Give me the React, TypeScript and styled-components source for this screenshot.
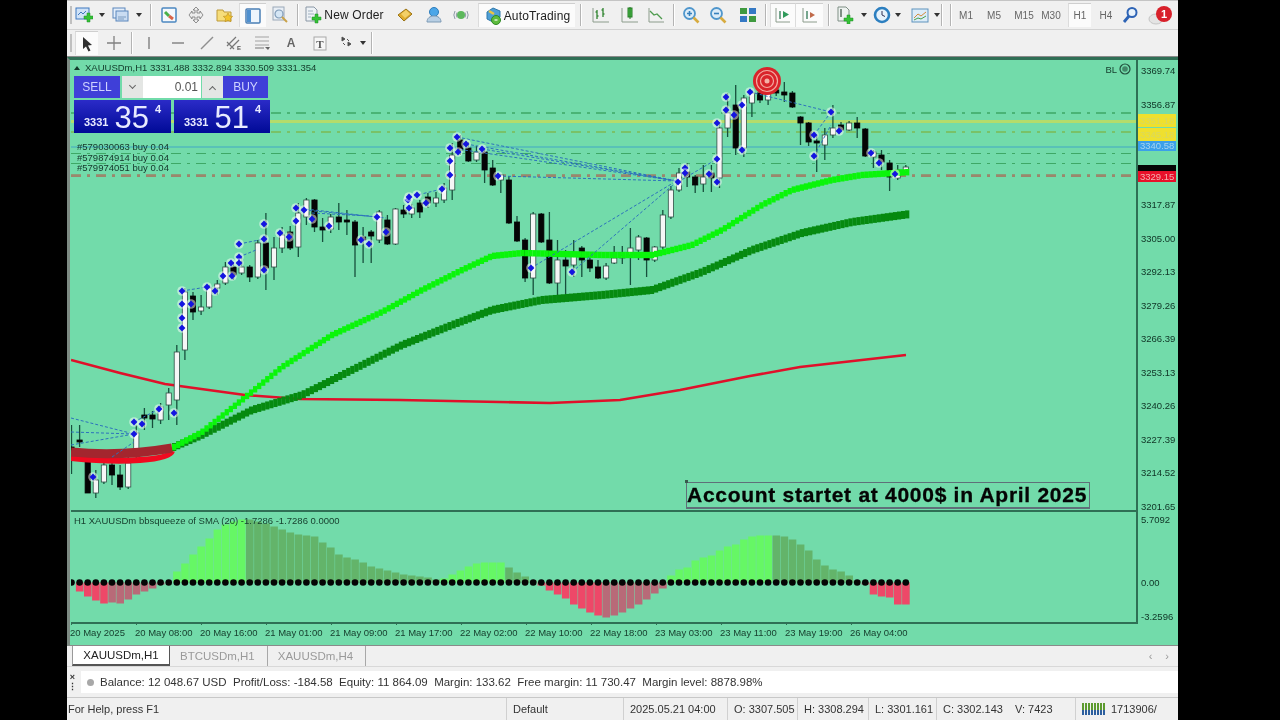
import React from "react";
import styled, { createGlobalStyle } from "styled-components";

const chartGreen = "#72dbaa";
const frameGreen = "#2f6f55";
const uiFont = `"Liberation Sans", Arial, sans-serif`;

const GlobalStyle = createGlobalStyle`
  html, body {
    margin: 0;
    padding: 0;
    width: 1280px;
    height: 720px;
    overflow: hidden;
    background: #000;
    font-family: ${uiFont};
  }
`;

const Screen = styled.div`
  width: 1111px;
  height: 720px;
  margin-left: 67px;
  display: flex;
  flex-direction: column;
  background: #f0f0f0;
  color: #222;
  overflow: hidden;
  filter: blur(0.6px);
`;

/* ---------- toolbars ---------- */

const TopBar = styled.div`
  height: 28px;
  display: flex;
  align-items: center;
  border-top: 1px solid #c4c4c4;
  border-bottom: 1px solid #d2d2d2;
`;

const DrawBar = styled.div`
  height: 27px;
  display: flex;
  align-items: center;
  border-bottom: 1px solid #8a8a8a;
  box-sizing: border-box;
`;

const Grip = styled.span<{ $w: number }>`
  width: 2px;
  height: 18px;
  margin-left: 3px;
  margin-right: ${p => p.$w - 5}px;
  background: #c0c0c0;
  flex: none;
`;

const Sep = styled.span<{ $w: number }>`
  flex: none;
  width: ${p => p.$w}px;
  height: 22px;
  display: flex;
  justify-content: center;
  &::before {
    content: "";
    width: 1px;
    background: #b4b4b4;
    border-right: 1px solid #fff;
  }
`;

const Tool = styled.span<{ $w: number; $active?: boolean }>`
  flex: none;
  width: ${p => p.$w}px;
  height: 24px;
  box-sizing: border-box;
  display: flex;
  align-items: center;
  justify-content: center;
  gap: 2px;
  font-size: 12px;
  background: ${p => (p.$active ? "#fbfbfb" : "transparent")};
  border-top: ${p => (p.$active ? "1px solid #cfcfcf" : "none")};
  border-left: ${p => (p.$active ? "1px solid #dcdcdc" : "none")};
`;

const Caret = styled.span<{ $w?: number }>`
  flex: none;
  width: ${p => p.$w ?? 16}px;
  display: flex;
  justify-content: center;
  &::before {
    content: "";
    flex: none;
    border-left: 3px solid transparent;
    border-right: 3px solid transparent;
    border-top: 4px solid #333;
  }
`;

const Period = styled.span<{ $w: number; $ml?: number; $active?: boolean }>`
  flex: none;
  width: ${p => p.$w}px;
  margin-left: ${p => p.$ml ?? 0}px;
  height: 24px;
  box-sizing: border-box;
  display: flex;
  align-items: center;
  justify-content: center;
  font-size: 10px;
  color: #666;
  background: ${p => (p.$active ? "#fbfbfb" : "transparent")};
  border-top: ${p => (p.$active ? "1px solid #cfcfcf" : "none")};
  border-left: ${p => (p.$active ? "1px solid #dcdcdc" : "none")};
`;

const Icon = ({ children, size = 18 }: { children: React.ReactNode; size?: number }) => (
  <svg width={size} height={size} viewBox="0 0 18 18">
    {children}
  </svg>
);

const Plus = ({ x = 0, y = 0 }: { x?: number; y?: number }) => (
  <path
    transform={`translate(${x} ${y})`}
    d="M9 8h3V5h3v3h3v3h-3v3h-3v-3H9z"
    fill="#35c235"
    stroke="#1f8f2a"
    strokeWidth="0.5"
  />
);

const NewChartIcon = () => (
  <Icon>
    <rect x="1" y="2" width="13" height="11" fill="#cfe2f7" stroke="#3f78c0" />
    <path d="M3 9l3-3 2 2 3-3" stroke="#3f78c0" fill="none" />
    <Plus x={0} y={2} />
  </Icon>
);
const ProfilesIcon = () => (
  <Icon>
    <rect x="1" y="2" width="12" height="10" fill="#e4eefa" stroke="#5a86bb" />
    <rect x="4" y="5" width="12" height="10" fill="#c9dcf2" stroke="#5a86bb" />
    <path d="M6 11h8M6 13h6" stroke="#7d9cc0" />
  </Icon>
);
const MarketIcon = () => (
  <Icon>
    <rect x="2" y="2" width="14" height="14" rx="1" fill="#f4f8fc" stroke="#4b87c0" strokeWidth="1.5" />
    <path d="M5 6l4 4" stroke="#49b049" strokeWidth="3" />
    <path d="M9 10l4 3" stroke="#d9654a" strokeWidth="3" />
  </Icon>
);
const NavigatorIcon = () => (
  <Icon>
    <path d="M9 1l3 3h-2v3h3V5l3 4-3 4v-2h-3v3h2l-3 3-3-3h2v-3H5v2L2 9l3-4v2h3V4H6z" fill="#ececec" stroke="#777" strokeWidth="0.8" />
  </Icon>
);
const FolderStarIcon = () => (
  <Icon>
    <path d="M1 4h6l1 2h7v9H1z" fill="#f6dd7a" stroke="#bd9a3a" />
    <path d="M12 7l1.5 3 3.2.4-2.3 2.2.6 3.2-3-1.6-3 1.6.6-3.2-2.3-2.2 3.2-.4z" fill="#f2c42c" stroke="#b88d20" strokeWidth="0.6" />
  </Icon>
);
const TerminalIcon = () => (
  <Icon>
    <rect x="2" y="2" width="14" height="14" rx="1" fill="#eef5fc" stroke="#4a7fb5" strokeWidth="1.5" />
    <rect x="3" y="3" width="4" height="12" fill="#4f90cf" />
  </Icon>
);
const TesterIcon = () => (
  <Icon>
    <rect x="2" y="1" width="11" height="13" fill="#e8eef5" stroke="#9aa8b8" />
    <circle cx="8" cy="8" r="4" fill="#d5e6f5" stroke="#7f9bb8" strokeWidth="1.2" />
    <path d="M11 11l5 5" stroke="#c9a24a" strokeWidth="2" />
  </Icon>
);
const OrderIcon = () => (
  <Icon>
    <path d="M2 1h8l3 3v11H2z" fill="#eef2f6" stroke="#8a97a5" />
    <path d="M4 5h5M4 8h6M4 11h3" stroke="#9fb0c0" />
    <Plus x={-1} y={3} />
  </Icon>
);
const GoldIcon = () => (
  <Icon>
    <path d="M2 9l8-6 6 5-8 7z" fill="#e0ad2f" stroke="#9b7415" />
    <path d="M5 8l5-4 4 4-5 4z" fill="#f3d067" />
  </Icon>
);
const PersonIcon = () => (
  <Icon>
    <circle cx="9" cy="6" r="4.5" fill="#4ba6e8" stroke="#2c7dbd" />
    <path d="M2 16c0-4 3-6 7-6s7 2 7 6z" fill="#b8cfe4" stroke="#7d9ab5" />
  </Icon>
);
const SignalIcon = () => (
  <Icon>
    <circle cx="9" cy="9" r="4" fill="#5cb85c" />
    <path d="M3 5a8 8 0 000 8M15 5a8 8 0 010 8M5 6.5a5 5 0 000 5M13 6.5a5 5 0 010 5" stroke="#8d9ba8" fill="none" />
  </Icon>
);
const AutoTradingIcon = () => (
  <Icon>
    <path d="M3 5l6-4 7 3v6l-7 5-6-3z" fill="#4f9fd6" stroke="#2f78ab" />
    <path d="M5 4l5 3" stroke="#e9c542" strokeWidth="2.5" />
    <circle cx="12" cy="13" r="4.5" fill="#5dbb3d" stroke="#2f8a25" />
    <path d="M10.5 13h3" stroke="#fff" strokeWidth="1.2" />
  </Icon>
);
const BarsIcon = () => (
  <Icon>
    <path d="M1 2v14h16" stroke="#8c9c8c" fill="none" />
    <path d="M5 4v9M3.5 6H5M5 10h1.5M11 2v9M9.5 4H11M11 8h1.5" stroke="#3b8b3b" strokeWidth="1.4" fill="none" />
  </Icon>
);
const CandlesIcon = () => (
  <Icon>
    <path d="M1 2v14h16" stroke="#8c9c8c" fill="none" />
    <rect x="7" y="2" width="4" height="9" fill="#4cc14c" stroke="#257a25" />
    <path d="M9 1v12" stroke="#257a25" />
  </Icon>
);
const LineIcon = () => (
  <Icon>
    <path d="M2 2v14h15" stroke="#8c9c8c" fill="none" />
    <path d="M3 5l4 4 3-1 5 5" stroke="#4d9a4d" strokeWidth="1.3" fill="none" />
  </Icon>
);
const ZoomIcon = ({ out }: { out?: boolean }) => (
  <Icon>
    <circle cx="7.5" cy="7.5" r="5.5" fill="#dcecf8" stroke="#4f96cc" strokeWidth="1.8" />
    <path d="M11.5 11.5l5 5" stroke="#d7ab3f" strokeWidth="2.6" />
    <path d={out ? "M5 7.5h5" : "M5 7.5h5M7.5 5v5"} stroke="#3781bd" strokeWidth="1.6" />
  </Icon>
);
const TileIcon = () => (
  <Icon>
    <rect x="1" y="2" width="7" height="6" fill="#3f9a3f" />
    <rect x="10" y="2" width="7" height="6" fill="#3579c4" />
    <rect x="1" y="10" width="7" height="6" fill="#3579c4" />
    <rect x="10" y="10" width="7" height="6" fill="#3f9a3f" />
  </Icon>
);
const ScrollIcon = ({ shift }: { shift?: boolean }) => (
  <Icon>
    <path d="M2 1v14h14" stroke="#8c9c8c" fill="none" />
    <path d="M6 4v8" stroke="#4a8a6a" strokeWidth="1.5" />
    {shift ? (
      <path d="M9 5v6l5-3z" fill="#c06a4a" />
    ) : (
      <path d="M9 4v7l6-3.5z" fill="#2f9a5a" />
    )}
  </Icon>
);
const IndicatorIcon = () => (
  <Icon>
    <path d="M2 1h8l3 3v11H2z" fill="#eef2f0" stroke="#7f8f85" />
    <path d="M5 3v8" stroke="#7f8f85" strokeWidth="2" />
    <Plus x={-1} y={4} />
  </Icon>
);
const ClockIcon = () => (
  <Icon>
    <circle cx="9" cy="9" r="7" fill="#e6f2fb" stroke="#2c7fc0" strokeWidth="2.6" />
    <path d="M9 5v4l3 1.5" stroke="#335" fill="none" />
  </Icon>
);
const TemplateIcon = () => (
  <Icon>
    <rect x="1" y="3" width="16" height="13" fill="#dcecf8" stroke="#5f93bd" />
    <path d="M3 12l4-4 3 2 5-4" stroke="#d38a3a" fill="none" />
    <path d="M3 14l4-2 3 1 5-3" stroke="#4aa04a" fill="none" />
  </Icon>
);
const SearchIcon = () => (
  <Icon>
    <circle cx="11" cy="6.5" r="4.5" fill="#e8f2fb" stroke="#2d63b5" strokeWidth="2" />
    <path d="M8 10l-5 6" stroke="#2d63b5" strokeWidth="2.8" />
  </Icon>
);
const BellIcon = () => (
  <svg width="28" height="22" viewBox="0 0 28 22">
    <ellipse cx="11" cy="15" rx="7" ry="5" fill="#e4e4e4" stroke="#c4c4c4" />
    <circle cx="19" cy="10" r="8" fill="#d8202a" />
    <text x="19" y="14" fontSize="11" fontWeight="bold" fontFamily="Liberation Sans" fill="#fff" textAnchor="middle">
      1
    </text>
  </svg>
);

const CursorIcon = () => (
  <Icon>
    <path d="M5 2l9 8-4 .5 2.5 5-2 1-2.5-5L5 14z" fill="#2f2f2f" />
  </Icon>
);
const CrossIcon = () => (
  <Icon>
    <path d="M9 2v14M2 9h14" stroke="#808080" strokeWidth="1.3" />
  </Icon>
);
const VLineIcon = () => (
  <Icon>
    <path d="M9 3v12" stroke="#7f7f7f" strokeWidth="1.4" />
  </Icon>
);
const HLineIcon = () => (
  <Icon>
    <path d="M3 9h12" stroke="#7f7f7f" strokeWidth="1.4" />
  </Icon>
);
const TrendIcon = () => (
  <Icon>
    <path d="M3 15L15 3" stroke="#8f8f8f" strokeWidth="1.4" />
  </Icon>
);
const ChannelIcon = () => (
  <Icon>
    <path d="M2 12l9-9M5 15l9-9M2 8l7 7" stroke="#777" strokeWidth="1.2" />
    <text x="12" y="16" fontSize="6" fontFamily="Liberation Sans" fontWeight="bold" fill="#555">E</text>
  </Icon>
);
const FiboIcon = () => (
  <Icon>
    <path d="M2 3h14M2 7h14M2 11h14" stroke="#a2a2a2" />
    <path d="M2 14h9" stroke="#777" />
    <path d="M12 13l3 3 2-3z" fill="#666" />
  </Icon>
);
const TextToolIcon = () => (
  <Icon>
    <rect x="3" y="3" width="12" height="13" fill="#f6f6f6" stroke="#a8a8a8" />
    <text x="9" y="14" fontSize="11" fontFamily="Liberation Serif" fontWeight="bold" fill="#555" textAnchor="middle">T</text>
  </Icon>
);
const ShapesIcon = () => (
  <Icon>
    <path d="M3 3l3 2-3 2zM9 8l3 2-3 2zM4 9l2 2M8 5l2 2" fill="#444" stroke="#555" />
  </Icon>
);

const ToolLabel = styled.span`
  white-space: nowrap;
  letter-spacing: 0.15px;
`;

const TextA = styled.span`
  font-size: 12px;
  font-weight: bold;
  color: #666;
`;

/* ---------- chart ---------- */

const ChartFrame = styled.div`
  height: 589px;
  flex: none;
  box-sizing: border-box;
  background: ${chartGreen};
  border-top: 3px solid ${frameGreen};
  border-left: 3px solid #7d8a83;
  border-bottom: 1px solid #8a8a8a;
  padding-left: 1px;
  display: flex;
  flex-direction: column;
`;

const PaneRow = styled.div`
  display: flex;
  flex: none;
`;

const Plot = styled.div<{ $h: number; $line: number }>`
  position: relative;
  width: 1065px;
  height: ${p => p.$h}px;
  flex: none;
  border-right: 2px solid ${frameGreen};
  border-bottom: ${p => p.$line}px solid ${frameGreen};
  svg {
    display: block;
  }
`;

const PriceAxis = styled.div`
  position: relative;
  flex: 1;
  height: 452px;
  box-sizing: border-box;
  padding: 6px 0 0 3px;
  display: flex;
  flex-direction: column;
  justify-content: space-between;
`;

const AxisLabel = styled.span<{ $mt?: number }>`
  display: block;
  min-height: 10px;
  font-size: 9.5px;
  line-height: 10px;
  color: #0f3325;
  margin-top: ${p => p.$mt ?? 0}px;
  white-space: nowrap;
`;

const IndicatorAxis = styled.div`
  flex: 1;
  padding-left: 3px;
`;

const PriceTag = styled.span<{ $top: number; $h: number; $bg: string; $fg: string }>`
  position: absolute;
  top: ${p => p.$top}px;
  left: 0;
  width: 38px;
  height: ${p => p.$h}px;
  background: ${p => p.$bg};
  color: ${p => p.$fg};
  font-size: 9.5px;
  line-height: ${p => p.$h}px;
  padding-left: 2px;
  box-sizing: border-box;
  overflow: hidden;
`;

const Title = styled.div`
  position: absolute;
  top: 2px;
  left: 3px;
  font-size: 9.5px;
  line-height: 11px;
  color: #123a2a;
  white-space: nowrap;
  &::before {
    content: "";
    display: inline-block;
    margin: 0 5px 1px 0;
    border-left: 3px solid transparent;
    border-right: 3px solid transparent;
    border-bottom: 4px solid #123a2a;
  }
`;

const OrderLabels = styled.div`
  position: absolute;
  top: 82px;
  left: 6px;
  font-size: 9.5px;
  line-height: 10.5px;
  color: #14352a;
`;

const Smiley = styled.div`
  position: absolute;
  top: 3px;
  right: 5px;
  display: flex;
  align-items: center;
  gap: 2px;
  font-size: 9.5px;
  color: #17402f;
`;

const IndicatorTitle = styled.div`
  position: absolute;
  top: 3px;
  left: 3px;
  font-size: 9.5px;
  line-height: 11px;
  color: #17402f;
  white-space: nowrap;
`;

const Annotation = styled.div`
  position: absolute;
  left: 615px;
  top: 422px;
  width: 404px;
  height: 27px;
  box-sizing: border-box;
  border: 1.5px solid #5f7079;
  border-bottom-width: 2px;
  font-size: 21px;
  font-weight: bold;
  line-height: 23px;
  letter-spacing: 0.72px;
  -webkit-text-stroke: 0.3px #050505;
  color: #050505;
  white-space: nowrap;
  &::before {
    content: "";
    position: absolute;
    top: -3px;
    left: -2px;
    width: 3px;
    height: 3px;
    background: #375a4c;
  }
`;

/* trade panel */
const TradePanel = styled.div`
  position: absolute;
  top: 16px;
  left: 3px;
  width: 196px;
  display: flex;
  flex-direction: column;
  gap: 2px;
`;

const TradeTop = styled.div`
  height: 22px;
  display: flex;
`;

const TradeButton = styled.div<{ $w: number }>`
  width: ${p => p.$w}px;
  display: flex;
  align-items: center;
  justify-content: center;
  background: #3f3fd8;
  color: #cfd2ff;
  font-size: 12px;
`;

const Spin = styled.div<{ $ml: number; $up?: boolean }>`
  width: 21px;
  margin-left: ${p => p.$ml}px;
  background: #e4e6e4;
  display: flex;
  align-items: center;
  justify-content: center;
  &::before {
    content: "";
    width: 4px;
    height: 4px;
    border-left: 1.5px solid #666;
    border-top: 1.5px solid #666;
    transform: ${p => (p.$up ? "translateY(2px) rotate(45deg)" : "translateY(-2px) rotate(225deg)")};
  }
`;

const LotInput = styled.div`
  width: 58px;
  background: #fff;
  color: #555;
  font-size: 12px;
  line-height: 22px;
  text-align: right;
  padding-right: 3px;
  box-sizing: border-box;
`;

const QuoteRow = styled.div`
  display: flex;
  gap: 3px;
`;

const Quote = styled.div<{ $w: number }>`
  position: relative;
  width: ${p => p.$w}px;
  height: 33px;
  display: flex;
  align-items: flex-end;
  justify-content: flex-start;
  padding-left: 10px;
  box-sizing: border-box;
  background: linear-gradient(#2b2bc8, #000a96);
  color: #e8ebff;
  gap: 6px;
`;

const QuoteSmall = styled.span`
  font-size: 11px;
  font-weight: bold;
  line-height: 11px;
  padding-bottom: 5px;
`;

const QuoteBig = styled.span`
  font-size: 31px;
  line-height: 31px;
`;

const QuoteSup = styled.span`
  font-size: 11px;
  font-weight: bold;
  line-height: 11px;
  align-self: flex-start;
  padding-top: 4px;
`;

const TimeAxis = styled.div`
  display: flex;
  height: 19px;
  flex: none;
  margin-left: -1px;
`;

const TimeCell = styled.span`
  position: relative;
  flex: none;
  width: 65px;
  padding-top: 3px;
  font-size: 9.5px;
  line-height: 11px;
  color: #17402f;
  white-space: nowrap;
  &::before {
    content: "";
    position: absolute;
    top: -2px;
    left: 1px;
    width: 1px;
    height: 3px;
    background: ${frameGreen};
  }
`;

/* ---------- bottom bars ---------- */

const TabBar = styled.div`
  height: 21px;
  flex: none;
  display: flex;
  align-items: flex-end;
  padding-left: 5px;
  font-size: 11.5px;
  border-bottom: 1px solid #d8d8d8;
  box-sizing: border-box;
`;

const ActiveTab = styled.span`
  width: 98px;
  height: 20px;
  display: flex;
  align-items: center;
  justify-content: center;
  background: #fff;
  border-left: 1px solid #999;
  border-right: 1px solid #555;
  border-bottom: 2px solid #555;
  box-sizing: border-box;
  color: #222;
`;

const IdleTab = styled.span`
  height: 20px;
  display: flex;
  align-items: center;
  padding: 0 12px 0 10px;
  color: #9a9a9a;
  border-right: 1px solid #a8a8a8;
  box-sizing: border-box;
`;

const TabArrows = styled.span`
  margin-left: auto;
  margin-right: 9px;
  display: flex;
  gap: 13px;
  color: #999;
  font-size: 11px;
  align-self: center;
`;

const AccountRow = styled.div`
  height: 31px;
  flex: none;
  display: flex;
  align-items: center;
  box-sizing: border-box;
  border-bottom: 1px solid #c8c8c8;
`;

const CloseGutter = styled.div`
  width: 14px;
  flex: none;
  display: flex;
  flex-direction: column;
  align-items: center;
  font-size: 9px;
  line-height: 10px;
  font-weight: bold;
  color: #333;
  padding-right: 3px;
  box-sizing: border-box;
`;

const AccountBox = styled.div`
  flex: 1;
  height: 22px;
  background: #fff;
  display: flex;
  align-items: center;
  gap: 6px;
  padding-left: 6px;
  font-size: 11.5px;
  white-space: pre;
  color: #333;
`;

const Dot = styled.span`
  width: 7px;
  height: 7px;
  border-radius: 50%;
  background: #a8a8a8;
`;

const StatusBar = styled.div`
  flex: 1;
  display: flex;
  align-items: center;
  font-size: 11px;
  color: #333;
  white-space: nowrap;
`;

const StatusCell = styled.span<{ $w: number; $flat?: boolean }>`
  flex: none;
  width: ${p => p.$w}px;
  height: 100%;
  box-sizing: border-box;
  display: flex;
  align-items: center;
  gap: 5px;
  padding-left: 6px;
  border-left: ${p => (p.$flat ? "none" : "1px solid #d0d0d0")};
`;

const HelpText = styled(StatusCell)`
  padding-left: 1px;
`;

const Candles: [number, number, number, number, "w" | "b"][] = [
  [447, 450, 425, 474, "b"], [440, 441, 425, 447, "b"], [462, 493, 450, 493, "b"], [480, 493, 470, 498, "w"],
  [465, 482, 460, 484, "w"], [465, 475, 461, 485, "b"], [475, 487, 465, 490, "b"], [463, 487, 450, 489, "w"],
  [433, 450, 425, 462, "w"], [415, 418, 408, 430, "b"], [415, 419, 411, 428, "b"], [407, 420, 403, 424, "w"],
  [393, 405, 388, 420, "w"], [352, 400, 345, 425, "w"], [292, 350, 288, 360, "w"], [296, 312, 292, 320, "b"],
  [307, 311, 295, 315, "w"], [288, 307, 285, 309, "w"], [284, 288, 280, 295, "w"], [267, 283, 262, 285, "w"],
  [267, 275, 262, 280, "b"], [267, 273, 258, 275, "w"], [267, 277, 265, 282, "b"], [243, 277, 240, 279, "w"],
  [243, 268, 213, 290, "b"], [248, 267, 237, 280, "w"], [235, 248, 227, 253, "w"], [232, 248, 226, 250, "b"],
  [213, 247, 203, 257, "w"], [200, 217, 198, 225, "w"], [200, 227, 199, 232, "b"], [227, 230, 218, 242, "b"],
  [217, 229, 214, 233, "w"], [217, 222, 203, 230, "b"], [220, 222, 210, 235, "b"], [222, 245, 220, 277, "b"],
  [237, 240, 227, 263, "b"], [232, 236, 230, 263, "b"], [212, 240, 210, 243, "w"], [220, 244, 215, 245, "b"],
  [209, 244, 208, 245, "w"], [210, 214, 205, 218, "b"], [208, 214, 204, 218, "w"], [203, 212, 200, 218, "b"],
  [197, 203, 193, 208, "b"], [198, 203, 192, 207, "w"], [188, 200, 183, 203, "w"], [155, 190, 143, 200, "w"],
  [140, 150, 135, 155, "b"], [148, 161, 142, 162, "b"], [152, 160, 146, 162, "w"], [152, 170, 148, 183, "b"],
  [168, 185, 160, 186, "b"], [175, 180, 174, 193, "w"], [180, 223, 176, 224, "b"], [222, 241, 216, 242, "b"],
  [240, 278, 238, 282, "b"], [214, 278, 212, 295, "w"], [214, 242, 213, 243, "b"], [240, 283, 212, 284, "b"],
  [260, 283, 240, 297, "w"], [260, 266, 250, 295, "b"], [253, 265, 240, 277, "w"], [248, 260, 246, 277, "b"],
  [260, 268, 258, 272, "b"], [267, 278, 260, 279, "b"], [266, 278, 263, 280, "w"], [258, 263, 246, 264, "w"],
  [256, 258, 246, 264, "w"], [248, 255, 228, 285, "w"], [237, 250, 235, 260, "w"], [238, 260, 237, 277, "b"],
  [247, 260, 246, 262, "w"], [215, 247, 210, 249, "w"], [190, 217, 186, 219, "w"], [173, 190, 168, 192, "w"],
  [172, 177, 163, 187, "b"], [177, 185, 175, 193, "b"], [177, 184, 165, 192, "w"], [173, 178, 165, 192, "b"],
  [128, 178, 122, 188, "w"], [113, 128, 93, 137, "w"], [105, 148, 85, 155, "b"], [98, 148, 95, 157, "w"],
  [93, 103, 90, 117, "w"], [93, 100, 90, 103, "b"], [93, 100, 90, 105, "w"], [90, 93, 83, 96, "b"],
  [92, 95, 82, 102, "b"], [93, 107, 91, 108, "b"], [117, 123, 116, 145, "b"], [123, 142, 122, 146, "b"],
  [141, 142, 135, 172, "b"], [135, 145, 128, 160, "w"], [128, 135, 105, 138, "w"], [125, 130, 122, 132, "b"],
  [123, 130, 121, 131, "w"], [123, 128, 117, 138, "b"], [129, 156, 128, 157, "b"], [152, 157, 150, 168, "w"],
  [155, 162, 150, 170, "b"], [163, 177, 160, 191, "b"], [170, 178, 165, 180, "w"], [167, 172, 165, 173, "w"],
];

const Markers: [number, number][] = [
  [134, 422], [142, 424], [134, 434], [159, 409], [174, 413], [93, 477], [182, 291], [182, 304], [191, 304],
  [182, 318], [182, 328], [207, 287], [215, 291], [223, 276], [231, 263], [232, 276], [239, 244], [239, 257],
  [239, 263], [264, 224], [264, 239], [264, 270], [280, 233], [289, 237], [296, 208], [296, 221], [304, 210],
  [312, 219], [329, 226], [361, 240], [369, 244], [377, 217], [386, 232], [408, 200], [417, 195], [457, 137],
  [450, 148], [458, 152], [466, 144], [482, 149], [450, 161], [450, 175], [498, 176], [442, 189], [426, 203],
  [409, 197], [409, 208], [531, 268], [572, 272], [678, 182], [685, 168], [685, 173], [709, 174], [717, 159],
  [717, 123], [717, 182], [726, 97], [726, 110], [734, 115], [742, 105], [742, 150], [750, 92], [814, 135],
  [814, 156], [831, 112], [839, 131], [871, 153], [879, 163], [895, 174],
];

const TradeLines: [number, number, number, number][] = [
  [71, 418, 134, 434], [71, 432, 134, 434], [71, 445, 134, 434], [112, 457, 134, 442], [134, 422, 159, 409],
  [182, 291, 207, 287], [239, 244, 264, 239], [239, 257, 256, 250], [296, 208, 386, 218], [304, 210, 377, 217],
  [312, 213, 369, 216], [457, 137, 677, 181], [466, 144, 677, 181], [450, 148, 677, 181], [482, 149, 677, 181],
  [498, 176, 677, 181], [531, 268, 673, 183], [572, 272, 673, 185], [678, 182, 717, 159], [750, 92, 831, 112],
  [831, 112, 814, 135], [814, 156, 831, 125], [409, 197, 442, 189],
];

const brightMa: [number, number][] = [
  [172, 447], [200, 432], [240, 400], [280, 367], [330, 335], [380, 312], [420, 290], [460, 270], [490, 256],
  [520, 253], [560, 254], [600, 255], [650, 255], [690, 245], [720, 230], [760, 205], [790, 190], [830, 180],
  [860, 175], [908, 172],
];

const darkMa: [number, number][] = [
  [172, 447], [200, 435], [250, 410], [300, 395], [350, 370], [400, 345], [450, 325], [490, 310], [540, 300],
  [600, 295], [650, 290], [700, 272], [750, 250], [800, 233], [850, 222], [908, 214],
];

const redMa: [number, number][] = [
  [71, 360], [120, 373], [165, 384], [245, 395], [300, 399], [400, 400], [550, 403], [620, 400], [680, 390],
  [750, 376], [800, 367], [906, 355],
];

const barStep = 8.1;
const barX = (i: number) => 71.5 + i * barStep;

const interpolate = (pts: [number, number][], x: number) => {
  for (let i = 1; i < pts.length; i++) {
    if (x <= pts[i][0]) {
      const [x0, y0] = pts[i - 1];
      const [x1, y1] = pts[i];
      return y0 + ((y1 - y0) * (x - x0)) / (x1 - x0);
    }
  }
  return pts[pts.length - 1][1];
};

const toPoints = (pts: [number, number][]) => pts.map(p => p.join(",")).join(" ");

const maSteps: number[] = [];
for (let x = 172; x < 906; x += barStep / 2) maSteps.push(x);

const PriceChart = () => (
  <svg width="1065" height="450" viewBox="71 60 1065 450">
    <path d="M71 113H1136" stroke="#3ea866" strokeDasharray="10 6 3 6" strokeWidth="1.4" />
    <path d="M71 121.5H1136" stroke="#b4dc6a" strokeWidth="3" />
    <path d="M71 132H1136" stroke="#b4dc6a" strokeWidth="2" strokeDasharray="10 6 3 6" />
    <path d="M71 132H1136" stroke="#3ea866" strokeWidth="1" strokeDasharray="10 6 3 6" />
    <path d="M71 147H1136" stroke="#52b8bb" strokeWidth="1.6" />
    <path d="M71 153.5H1136" stroke="#3ea866" strokeWidth="1.2" strokeDasharray="10 6 3 6" />
    <path d="M71 163.5H1136" stroke="#3ea866" strokeWidth="1.2" strokeDasharray="10 6 3 6" />
    <path d="M71 175.5H1136" stroke="#8d9a78" strokeWidth="3" strokeDasharray="10 6 3 6" />
    <path d="M71 176H1136" stroke="#b36a5a" strokeWidth="0.8" strokeDasharray="10 6 3 6" />

    <polyline points={toPoints(redMa)} fill="none" stroke="#e0102a" strokeWidth="2.6" />

    {Candles.map(([top, bottom, high, low, kind], i) => (
      <g key={i}>
        <path d={`M${barX(i)} ${high}V${low}`} stroke="#174f3c" strokeWidth="1.3" />
        <rect
          x={barX(i) - 2.6}
          y={top}
          width="5.2"
          height={Math.max(bottom - top, 2)}
          fill={kind === "w" ? "#f6f6f6" : "#050505"}
          stroke={kind === "w" ? "#2f4f45" : "#050505"}
          strokeWidth="0.8"
        />
      </g>
    ))}

    {maSteps.map(x => (
      <rect key={x} x={x} y={interpolate(darkMa, x) - 4} width={barStep / 2 + 0.2} height="8" fill="#068a10" />
    ))}
    {maSteps.map(x => (
      <rect key={x} x={x} y={interpolate(brightMa, x) - 3.2} width={barStep / 2 + 0.2} height="6.4" fill="#0af50a" />
    ))}
    <path d="M71 458Q110 462 140 460T172 451" fill="none" stroke="#f00a20" strokeWidth="6" />
    <path d="M71 452Q120 457 172 448" fill="none" stroke="#a3262e" strokeWidth="9" />

    {TradeLines.map(([x1, y1, x2, y2], i) => (
      <line key={i} x1={x1} y1={y1} x2={x2} y2={y2} stroke="#2c72bc" strokeWidth="1" strokeDasharray="3 2" />
    ))}
    {Markers.map(([x, y], i) => (
      <g key={i}>
        <circle cx={x} cy={y} r="4.8" fill="#fff" fillOpacity="0.5" />
        <path d={`M${x} ${y - 3.4}L${x + 3.4} ${y}L${x} ${y + 3.4}L${x - 3.4} ${y}Z`} fill="#1414e0" />
      </g>
    ))}

    <circle cx="767" cy="81" r="14" fill="#d9232a" />
    <circle cx="767" cy="81" r="10.5" fill="none" stroke="#f3a9a0" strokeWidth="1.2" />
    <circle cx="767" cy="81" r="6.5" fill="none" stroke="#f3a9a0" strokeWidth="1.2" />
    <circle cx="767" cy="81" r="2.5" fill="#f5b0a6" />
  </svg>
);

const squeeze: number[] = [
  0, -9, -14, -18, -21, -20, -21, -17, -12, -9, -6, -2, 0, 11, 19, 28, 36, 44, 53, 58, 61, 63, 63, 61, 59, 56, 53, 50,
  48, 47, 46, 40, 35, 28, 25, 23, 20, 16, 14, 12, 10, 8, 7, 6, 5, 3, 4, 8, 12, 16, 19, 20, 20, 20, 15, 10, 6, 2, -3,
  -8, -12, -16, -22, -26, -30, -33, -35, -33, -30, -26, -22, -17, -11, -6, 7, 13, 15, 22, 25, 27, 32, 36, 38, 43, 46,
  47, 47, 47, 46, 43, 38, 32, 23, 17, 13, 11, 7, 2, -2, -12, -14, -15, -22, -22,
];

const inRange = (i: number, ranges: [number, number][]) => ranges.some(([a, b]) => i >= a && i <= b);

const barColor = (v: number, i: number) => {
  if (v >= 0) return inRange(i, [[22, 45], [54, 57], [87, 97]]) ? "#63b46a" : "#66f765";
  return inRange(i, [[5, 12], [66, 73], [98, 98]]) ? "#b86a78" : "#ee4868";
};

const IndicatorChart = () => (
  <svg width="1065" height="110" viewBox="71 512 1065 110">
    {squeeze.map((v, i) => (
      <rect
        key={i}
        x={barX(i) - 3.7}
        y={v >= 0 ? 582.5 - v : 582.5}
        width="7.6"
        height={Math.abs(v)}
        fill={barColor(v, i)}
      />
    ))}
    {squeeze.map((_, i) => (
      <circle key={i} cx={barX(i)} cy="582.5" r="3.3" fill="#050505" />
    ))}
  </svg>
);

// the two empty slots sit under the yellow and red price tags
const priceLabels = [
  "3369.74", "3356.87", "", "", "3317.87", "3305.00", "3292.13", "3279.26", "3266.39", "3253.13",
  "3240.26", "3227.39", "3214.52", "3201.65",
];

const timeLabels = [
  "20 May 2025", "20 May 08:00", "20 May 16:00", "21 May 01:00", "21 May 09:00", "21 May 17:00", "22 May 02:00",
  "22 May 10:00", "22 May 18:00", "23 May 03:00", "23 May 11:00", "23 May 19:00", "26 May 04:00",
];

const App = () => (
  <>
    <GlobalStyle />
    <Screen>
      <TopBar>
        <Grip $w={7} />
        <Tool $w={20}><NewChartIcon /></Tool>
        <Caret />
        <Tool $w={21}><ProfilesIcon /></Tool>
        <Caret />
        <Sep $w={8} />
        <Tool $w={27}><MarketIcon /></Tool>
        <Tool $w={28}><NavigatorIcon /></Tool>
        <Tool $w={29}><FolderStarIcon /></Tool>
        <Tool $w={27} $active><TerminalIcon /></Tool>
        <Tool $w={28}><TesterIcon /></Tool>
        <Sep $w={8} />
        <Tool $w={84}><OrderIcon /><ToolLabel>New Order</ToolLabel></Tool>
        <Tool $w={38}><GoldIcon /></Tool>
        <Tool $w={20}><PersonIcon /></Tool>
        <Tool $w={34}><SignalIcon /></Tool>
        <Tool $w={97} $active><AutoTradingIcon /><ToolLabel>AutoTrading</ToolLabel></Tool>
        <Sep $w={12} />
        <Tool $w={28}><BarsIcon /></Tool>
        <Tool $w={30}><CandlesIcon /></Tool>
        <Tool $w={22}><LineIcon /></Tool>
        <Sep $w={14} />
        <Tool $w={20}><ZoomIcon /></Tool>
        <Tool $w={34}><ZoomIcon out /></Tool>
        <Tool $w={26}><TileIcon /></Tool>
        <Sep $w={9} />
        <Tool $w={25} $active><ScrollIcon /></Tool>
        <Tool $w={28} $active><ScrollIcon shift /></Tool>
        <Sep $w={12} />
        <Tool $w={20}><IndicatorIcon /></Tool>
        <Caret $w={17} />
        <Tool $w={20}><ClockIcon /></Tool>
        <Caret $w={12} />
        <Tool $w={32}><TemplateIcon /></Tool>
        <Caret $w={1} />
        <Sep $w={10} />
        <Sep $w={7} />
        <Period $w={24}>M1</Period>
        <Period $w={32}>M5</Period>
        <Period $w={28}>M15</Period>
        <Period $w={26}>M30</Period>
        <Period $w={23} $ml={4} $active>H1</Period>
        <Period $w={30}>H4</Period>
        <Tool $w={18}><SearchIcon /></Tool>
        <Tool $w={39}><BellIcon /></Tool>
      </TopBar>
      <DrawBar>
        <Grip $w={8} />
        <Tool $w={23} $active><CursorIcon /></Tool>
        <Tool $w={32}><CrossIcon /></Tool>
        <Sep $w={4} />
        <Tool $w={30}><VLineIcon /></Tool>
        <Tool $w={28}><HLineIcon /></Tool>
        <Tool $w={30}><TrendIcon /></Tool>
        <Tool $w={24}><ChannelIcon /></Tool>
        <Tool $w={32}><FiboIcon /></Tool>
        <Tool $w={26}><TextA>A</TextA></Tool>
        <Tool $w={32}><TextToolIcon /></Tool>
        <Tool $w={24}><ShapesIcon /></Tool>
        <Caret $w={6} />
        <Sep $w={12} />
      </DrawBar>

      <ChartFrame>
        <PaneRow>
          <Plot $h={450} $line={2}>
            <PriceChart />
            <Title>XAUUSDm,H1 3331.488 3332.894 3330.509 3331.354</Title>
            <TradePanel>
              <TradeTop>
                <TradeButton $w={46}>SELL</TradeButton>
                <Spin $ml={2} />
                <LotInput>0.01</LotInput>
                <Spin $ml={1} $up />
                <TradeButton $w={45}>BUY</TradeButton>
              </TradeTop>
              <QuoteRow>
                <Quote $w={97}>
                  <QuoteSmall>3331</QuoteSmall>
                  <QuoteBig>35</QuoteBig>
                  <QuoteSup>4</QuoteSup>
                </Quote>
                <Quote $w={96}>
                  <QuoteSmall>3331</QuoteSmall>
                  <QuoteBig>51</QuoteBig>
                  <QuoteSup>4</QuoteSup>
                </Quote>
              </QuoteRow>
            </TradePanel>
            <OrderLabels>
              <div>#579030063 buy 0.04</div>
              <div>#579874914 buy 0.04</div>
              <div>#579974051 buy 0.04</div>
            </OrderLabels>
            <Smiley>
              BL
              <svg width="12" height="12" viewBox="0 0 12 12">
                <circle cx="6" cy="6" r="5" fill="none" stroke="#23503e" strokeWidth="1.2" />
                <circle cx="6" cy="6" r="2.8" fill="#23503e" fillOpacity="0.6" />
              </svg>
            </Smiley>
            <Annotation>Account startet at 4000$ in April 2025</Annotation>
          </Plot>
          <PriceAxis>
            {priceLabels.map((label, i) => (
              <AxisLabel key={i}>{label}</AxisLabel>
            ))}
            <PriceTag $top={54} $h={13} $bg="#efe02e" $fg="#d8d860">3351.18</PriceTag>
            <PriceTag $top={68} $h={13} $bg="#efe02e" $fg="#d8d860">3345.18</PriceTag>
            <PriceTag $top={81} $h={10} $bg="#3ba0ea" $fg="#a5d3f0">3340.58</PriceTag>
            <PriceTag $top={105} $h={6} $bg="#060606" $fg="#888" />
            <PriceTag $top={111} $h={11} $bg="#e8102a" $fg="#f4b0b0">3329.15</PriceTag>
          </PriceAxis>
        </PaneRow>
        <PaneRow>
          <Plot $h={110} $line={2}>
            <IndicatorChart />
            <IndicatorTitle>H1 XAUUSDm bbsqueeze of SMA (20) -1.7286 -1.7286 0.0000</IndicatorTitle>
          </Plot>
          <IndicatorAxis>
            <AxisLabel $mt={3}>5.7092</AxisLabel>
            <AxisLabel $mt={53}>0.00</AxisLabel>
            <AxisLabel $mt={24}>-3.2596</AxisLabel>
          </IndicatorAxis>
        </PaneRow>
        <TimeAxis>
          {timeLabels.map(label => (
            <TimeCell key={label}>{label}</TimeCell>
          ))}
        </TimeAxis>
      </ChartFrame>

      <TabBar>
        <ActiveTab>XAUUSDm,H1</ActiveTab>
        <IdleTab>BTCUSDm,H1</IdleTab>
        <IdleTab>XAUUSDm,H4</IdleTab>
        <TabArrows>
          <span>‹</span>
          <span>›</span>
        </TabArrows>
      </TabBar>

      <AccountRow>
        <CloseGutter>
          <span>×</span>
          <span>⋮</span>
        </CloseGutter>
        <AccountBox>
          <Dot />
          Balance: 12 048.67 USD  Profit/Loss: -184.58  Equity: 11 864.09  Margin: 133.62  Free margin: 11 730.47  Margin level: 8878.98%
        </AccountBox>
      </AccountRow>

      <StatusBar>
        <HelpText $w={439} $flat>For Help, press F1</HelpText>
        <StatusCell $w={117}>Default</StatusCell>
        <StatusCell $w={104}>2025.05.21 04:00</StatusCell>
        <StatusCell $w={70}>O: 3307.505</StatusCell>
        <StatusCell $w={71}>H: 3308.294</StatusCell>
        <StatusCell $w={68}>L: 3301.161</StatusCell>
        <StatusCell $w={73}>C: 3302.143</StatusCell>
        <StatusCell $w={66} $flat>V: 7423</StatusCell>
        <StatusCell $w={103}>
          <svg width="24" height="12" viewBox="0 0 24 12">
            <path d="M1 0v12M4 0v12M7 0v12M10 0v12M13 0v12M16 0v12M19 0v12M22 0v12" stroke="#5c9a2e" strokeWidth="2" />
            <path d="M1 7v5M4 7v5M7 7v5M10 7v5M13 7v5M16 7v5M19 7v5M22 7v5" stroke="#2d5f9e" strokeWidth="2" />
          </svg>
          1713906/
        </StatusCell>
      </StatusBar>
    </Screen>
  </>
);

export default App;
